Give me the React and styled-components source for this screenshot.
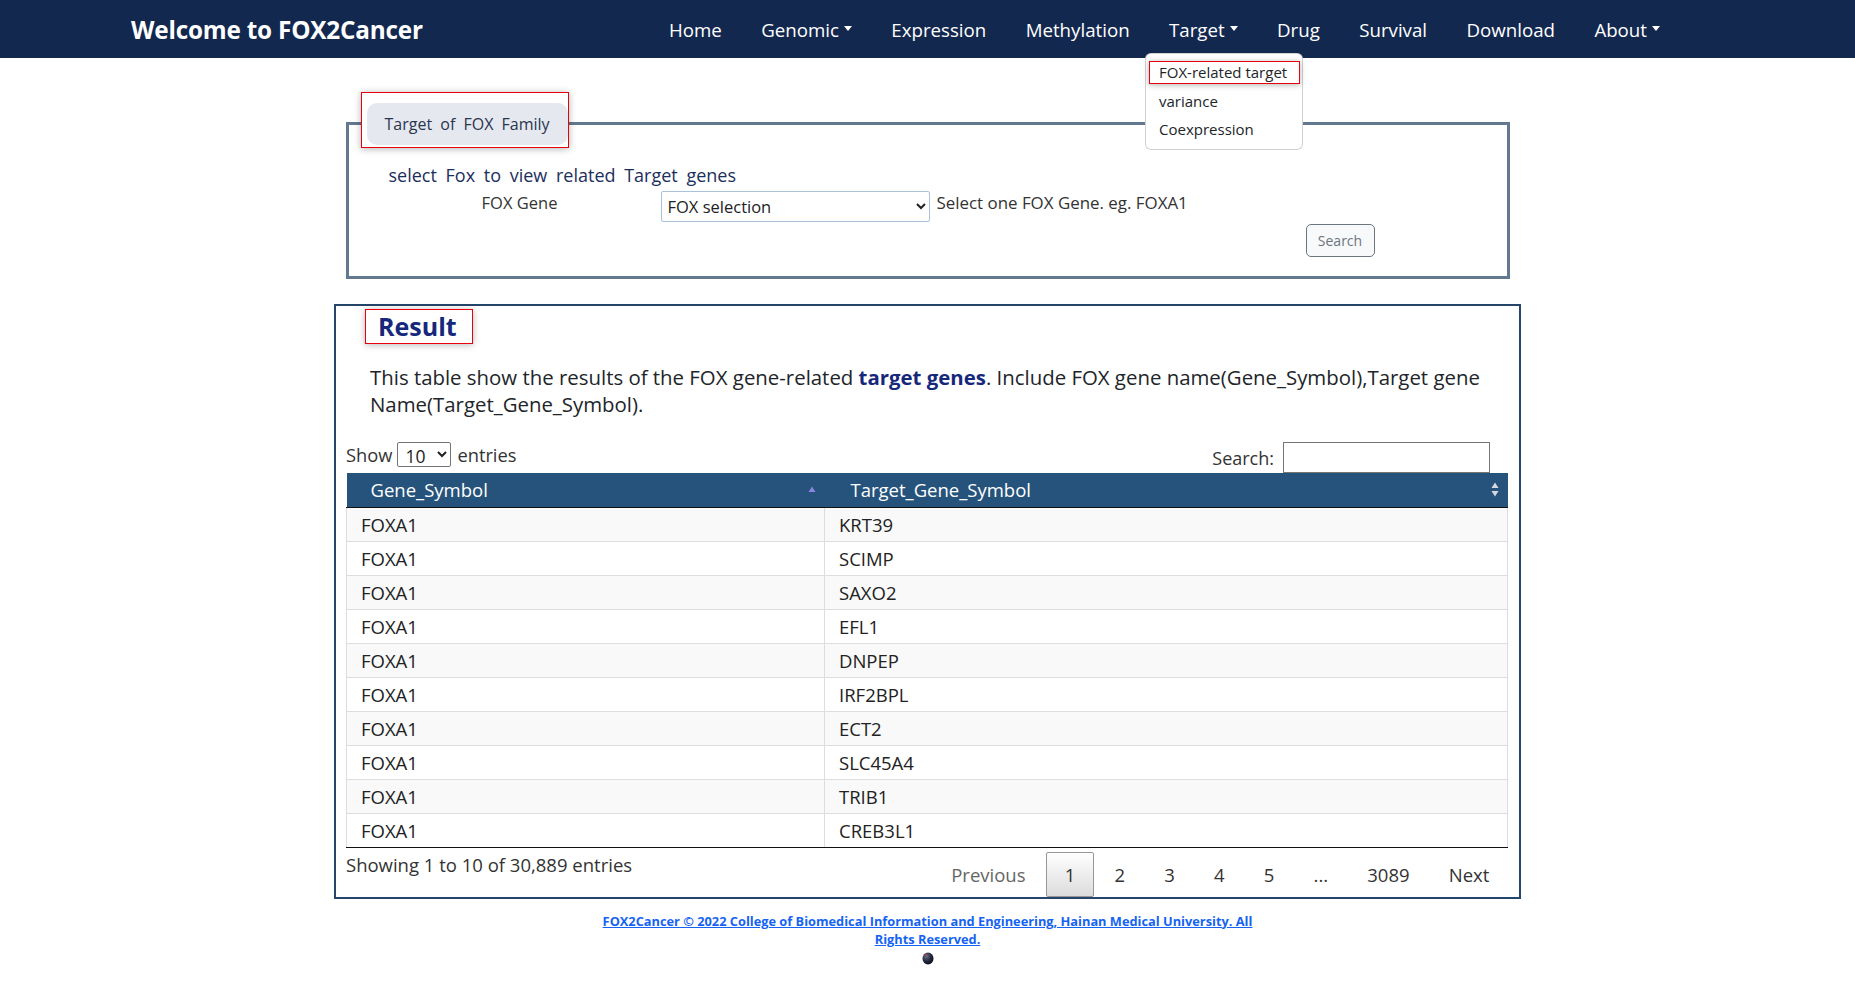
import React from "react";
import styled, { createGlobalStyle } from "styled-components";

const GlobalStyle = createGlobalStyle`
  html, body { margin: 0; padding: 0; background: #fff; }
  body { font-family: "Open Sans", "Noto Sans", Arial, sans-serif; color: #212529; }
  * { box-sizing: border-box; }
`;

const NavBar = styled.header`
  display: flex;
  align-items: stretch;
  height: 58px;
  background: #13284f;
  padding: 0 195px 0 131px;
  position: relative;
  z-index: 10;
`;

const Brand = styled.div`
  display: flex;
  align-items: center;
  color: #fff;
  font-weight: 700;
  font-size: 24.3px;
  letter-spacing: -0.2px;
`;

const NavList = styled.nav`
  display: flex;
  align-items: stretch;
  margin-left: auto;
  gap: 39.4px;
`;

const NavItem = styled.div`
  position: relative;
  display: flex;
  align-items: center;
  color: #fff;
  font-size: 18.7px;
  &::after {
    content: ${(p) => (p.$caret ? "''" : "none")};
    display: inline-block;
    margin-left: 5px;
    border-top: 5.5px solid #fff;
    border-left: 4.5px solid transparent;
    border-right: 4.5px solid transparent;
    transform: translateY(-1px);
  }
`;

const Dropdown = styled.div`
  position: absolute;
  top: 53px;
  left: -24px;
  width: 158px;
  background: #fff;
  border: 1px solid rgba(0, 0, 0, 0.18);
  border-radius: 6px;
  padding: 5px 0 6px;
  z-index: 20;
`;

const DropItem = styled.div`
  font-size: 15px;
  color: #212529;
  white-space: nowrap;
  ${(p) =>
    p.$active
      ? `
    margin: 2px 2px 3px 3px;
    border: 1px solid #e8000b;
    box-shadow: 0 1px 6px rgba(0,0,0,0.3);
    line-height: 21px;
    padding-left: 9px;
  `
      : `
    line-height: 28px;
    padding-left: 13px;
  `}
`;

const Main = styled.main`
  padding-top: 34px;
`;

const FieldSet = styled.fieldset`
  width: 1164px;
  margin: 0 auto;
  padding: 0 0 19px 0;
  border: 3px solid #62798f;
  min-width: 0;
`;

const Legend = styled.legend`
  margin-left: 12px;
  padding: 0 0 6px 0;
  float: none;
  width: auto;
`;

const RedFrame = styled.div`
  border: 1px solid #e8000b;
  box-shadow: 0 1px 7px rgba(0, 0, 0, 0.3);
  padding: 10px 0 2px 5px;
`;

const Pill = styled.div`
  height: 42px;
  border-radius: 10px;
  background: #e5e8ef;
  padding: 0 18px;
  display: flex;
  align-items: center;
  font-size: 16px;
  word-spacing: 4px;
  color: #2a3550;
`;

const Instruction = styled.div`
  margin: 9px 0 0 40px;
  font-size: 18px;
  line-height: 25px;
  word-spacing: 4px;
  color: #1c2f5c;
`;

const FormRow = styled.div`
  display: flex;
  align-items: flex-start;
  margin: 3px 0 0 40px;
`;

const FieldLabel = styled.div`
  width: 262px;
  text-align: center;
  font-size: 16.5px;
  line-height: 24px;
  color: #333;
`;

const GeneSelect = styled.select`
  margin-left: 10px;
  width: 269px;
  height: 31px;
  border: 1px solid #a9c1da;
  border-radius: 2px;
  background: #fff;
  font-family: inherit;
  font-size: 16.5px;
  color: #222;
  padding-left: 2px;
`;

const Hint = styled.div`
  margin-left: 7px;
  font-size: 16.9px;
  line-height: 24px;
  color: #333;
`;

const ButtonRow = styled.div`
  display: flex;
  justify-content: flex-end;
  padding-right: 132px;
  margin-top: 2px;
`;

const SearchButton = styled.button`
  width: 69px;
  height: 33px;
  border: 1px solid #6c757d;
  border-radius: 5px;
  background: #f8f9fa;
  color: #6c757d;
  font-family: inherit;
  font-size: 14px;
  padding: 0;
`;

const ResultBox = styled.section`
  width: 1187px;
  margin: 25px auto 0;
  border: 2px solid #25466a;
  padding: 3px 11px 0 10px;
`;

const ResultTitle = styled.h2`
  display: inline-block;
  margin: 0 0 0 19px;
  border: 1px solid #e8000b;
  box-shadow: 0 1px 7px rgba(0, 0, 0, 0.28);
  padding: 0 15px 0 12px;
  height: 35px;
  line-height: 32px;
  font-size: 25px;
  font-weight: 700;
  color: #16287c;
`;

const Description = styled.p`
  margin: 20px 12px 0 24px;
  font-size: 20.4px;
  line-height: 27px;
  color: #212529;
`;

const Emph = styled.strong`
  color: #16287c;
  font-weight: 700;
`;

const Controls = styled.div`
  display: flex;
  justify-content: space-between;
  align-items: flex-start;
  margin-top: 24px;
`;

const Length = styled.div`
  display: flex;
  align-items: center;
  font-size: 18.3px;
  line-height: 25px;
  color: #333;
`;

const LengthSelect = styled.select`
  margin: 0 6px 0 5px;
  width: 54px;
  height: 25px;
  border: 1px solid #767676;
  border-radius: 2px;
  background: #fff;
  font-family: inherit;
  font-size: 17.5px;
  padding: 0 0 0 3px;
  color: #222;
`;

const Filter = styled.label`
  display: flex;
  align-items: center;
  font-size: 18px;
  color: #333;
  padding-right: 18px;
`;

const FilterInput = styled.input`
  margin-left: 9px;
  width: 207px;
  height: 31px;
  border: 1px solid #767676;
  border-radius: 0;
  padding: 0 4px;
`;

const Table = styled.table`
  width: 100%;
  border-collapse: collapse;
  table-layout: fixed;
  font-size: 18.5px;
`;

const Th = styled.th`
  background: #25537b;
  color: #fff;
  font-weight: 400;
  text-align: left;
  height: 34px;
  padding: 0 9px 0 ${(p) => p.$pl}px;
  border-bottom: 1px solid #111;
  width: ${(p) => p.$w || "auto"};
`;

const ThInner = styled.div`
  display: flex;
  align-items: center;
  justify-content: space-between;
`;

const Tr = styled.tr`
  background: ${(p) => (p.$odd ? "#f9f9f9" : "#fff")};
  &:last-child td {
    border-bottom: 1px solid #111;
  }
`;

const Td = styled.td`
  height: 34px;
  padding: 0 14px;
  border-top: 1px solid #ddd;
  border-left: 1px solid #ddd;
  border-right: 1px solid #ddd;
  color: #222;
  line-height: 33px;
`;

const TableFoot = styled.div`
  display: flex;
  justify-content: space-between;
  align-items: flex-start;
`;

const Info = styled.div`
  font-size: 18.5px;
  line-height: 27px;
  padding-top: 3px;
  color: #333;
`;

const Pagination = styled.div`
  display: flex;
  margin-top: 4px;
`;

const PageBtn = styled.span`
  display: inline-block;
  margin-left: 2px;
  min-width: 28px;
  padding: 9px 17.6px;
  line-height: 25px;
  font-size: 18.5px;
  text-align: center;
  border-radius: 2px;
  border: 1px solid ${(p) => (p.$current ? "#979797" : "transparent")};
  background: ${(p) =>
    p.$current ? "linear-gradient(to bottom, #fff 0%, #dcdcdc 100%)" : "transparent"};
  color: ${(p) => (p.$disabled ? "#666" : "#333")};
`;

const Footer = styled.footer`
  width: 690px;
  margin: 13px auto 0;
  text-align: center;
  display: flex;
  flex-direction: column;
  align-items: center;
`;

const FooterLink = styled.a`
  font-size: 12.8px;
  line-height: 18px;
  font-weight: 700;
  color: #1463f3;
  text-decoration: underline;
`;

const Ball = styled.svg`
  margin-top: 4px;
  display: block;
`;

const SortAsc = () => (
  <svg width="8" height="7" viewBox="0 0 8 7">
    <path d="M4 0.5 L7.5 6 L0.5 6 Z" fill="#8a86e0" />
  </svg>
);

const SortBoth = () => (
  <svg width="8" height="15" viewBox="0 0 8 15">
    <path d="M4 0.5 L7.5 6 L0.5 6 Z" fill="#d7d7e0" />
    <path d="M4 14.5 L7.5 9 L0.5 9 Z" fill="#d7d7e0" />
  </svg>
);

const rows = ["KRT39", "SCIMP", "SAXO2", "EFL1", "DNPEP", "IRF2BPL", "ECT2", "SLC45A4", "TRIB1", "CREB3L1"];

export default function App() {
  return (
    <>
      <GlobalStyle />
      <NavBar>
        <Brand>Welcome to FOX2Cancer</Brand>
        <NavList>
          <NavItem>Home</NavItem>
          <NavItem $caret>Genomic</NavItem>
          <NavItem>Expression</NavItem>
          <NavItem>Methylation</NavItem>
          <NavItem $caret>
            Target
            <Dropdown>
              <DropItem $active>FOX-related target</DropItem>
              <DropItem>variance</DropItem>
              <DropItem>Coexpression</DropItem>
            </Dropdown>
          </NavItem>
          <NavItem>Drug</NavItem>
          <NavItem>Survival</NavItem>
          <NavItem>Download</NavItem>
          <NavItem $caret>About</NavItem>
        </NavList>
      </NavBar>
      <Main>
        <FieldSet>
          <Legend>
            <RedFrame>
              <Pill>Target of FOX Family</Pill>
            </RedFrame>
          </Legend>
          <Instruction>select Fox to view related Target genes</Instruction>
          <FormRow>
            <FieldLabel>FOX Gene</FieldLabel>
            <GeneSelect defaultValue="">
              <option value="">FOX selection</option>
            </GeneSelect>
            <Hint>Select one FOX Gene. eg. FOXA1</Hint>
          </FormRow>
          <ButtonRow>
            <SearchButton>Search</SearchButton>
          </ButtonRow>
        </FieldSet>

        <ResultBox>
          <ResultTitle>Result</ResultTitle>
          <Description>
            This table show the results of the FOX gene-related <Emph>target genes</Emph>. Include FOX gene
            name(Gene_Symbol),Target gene Name(Target_Gene_Symbol).
          </Description>
          <Controls>
            <Length>
              Show
              <LengthSelect defaultValue="10">
                <option value="10">10</option>
              </LengthSelect>
              entries
            </Length>
            <Filter>
              Search:
              <FilterInput type="search" />
            </Filter>
          </Controls>
          <Table>
            <thead>
              <tr>
                <Th $pl={24} $w="478px">
                  <ThInner>
                    <span>Gene_Symbol</span>
                    <SortAsc />
                  </ThInner>
                </Th>
                <Th $pl={26}>
                  <ThInner>
                    <span>Target_Gene_Symbol</span>
                    <SortBoth />
                  </ThInner>
                </Th>
              </tr>
            </thead>
            <tbody>
              {rows.map((r, i) => (
                <Tr key={r} $odd={i % 2 === 0}>
                  <Td>FOXA1</Td>
                  <Td>{r}</Td>
                </Tr>
              ))}
            </tbody>
          </Table>
          <TableFoot>
            <Info>Showing 1 to 10 of 30,889 entries</Info>
            <Pagination>
              <PageBtn $disabled>Previous</PageBtn>
              <PageBtn $current>1</PageBtn>
              <PageBtn>2</PageBtn>
              <PageBtn>3</PageBtn>
              <PageBtn>4</PageBtn>
              <PageBtn>5</PageBtn>
              <PageBtn>...</PageBtn>
              <PageBtn>3089</PageBtn>
              <PageBtn>Next</PageBtn>
            </Pagination>
          </TableFoot>
        </ResultBox>

        <Footer>
          <FooterLink href="#">
            FOX2Cancer © 2022 College of Biomedical Information and Engineering, Hainan Medical University. All
            Rights Reserved.
          </FooterLink>
          <Ball width="12" height="13" viewBox="0 0 12 13">
            <defs>
              <radialGradient id="ballg" cx="35%" cy="30%" r="70%">
                <stop offset="0%" stopColor="#6b6f86" />
                <stop offset="60%" stopColor="#262a3e" />
                <stop offset="100%" stopColor="#0e1020" />
              </radialGradient>
            </defs>
            <ellipse cx="6" cy="6.5" rx="5.5" ry="6" fill="url(#ballg)" />
            <circle cx="3.2" cy="2.8" r="1" fill="#c0303a" />
          </Ball>
        </Footer>
      </Main>
    </>
  );
}
